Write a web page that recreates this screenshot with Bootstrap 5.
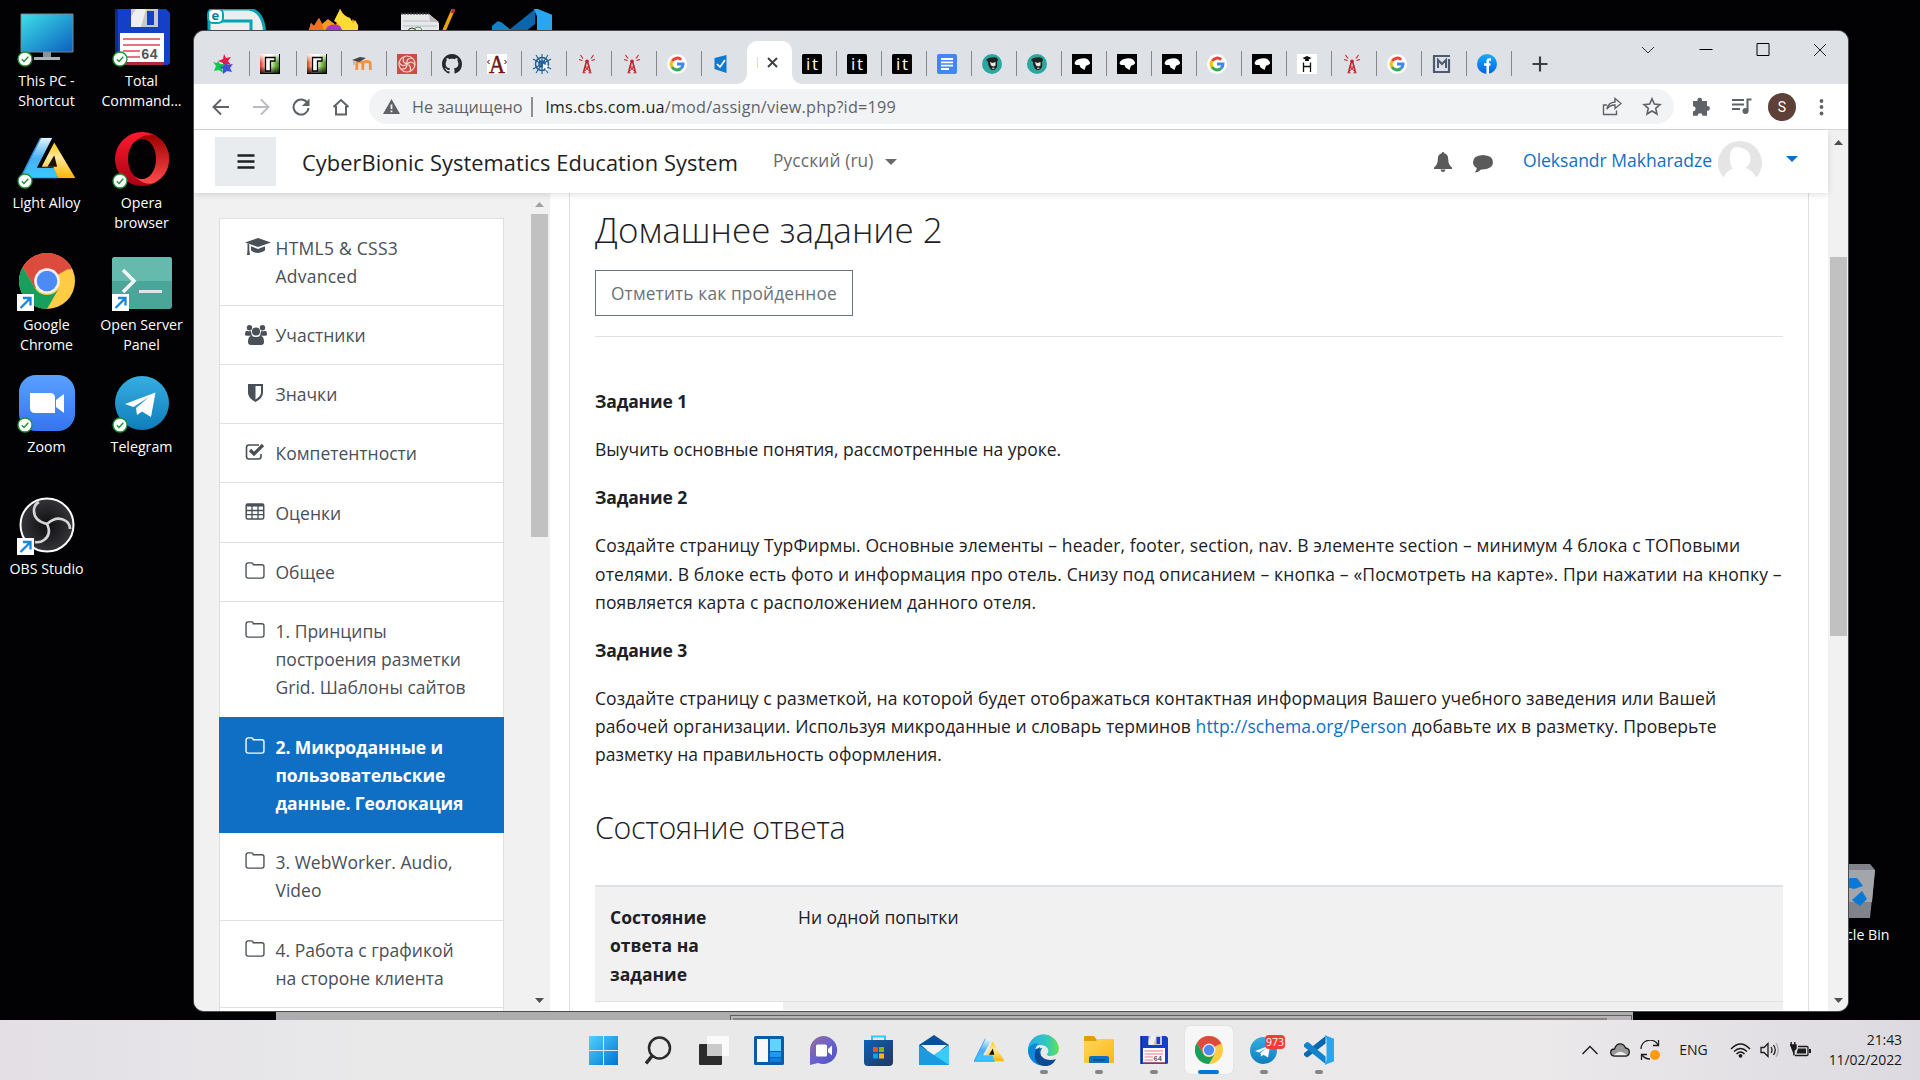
<!DOCTYPE html>
<html lang="ru">
<head>
<meta charset="utf-8">
<title>Домашнее задание 2</title>
<link rel="stylesheet" href="https://cdn.jsdelivr.net/npm/bootstrap@5.3.0/dist/css/bootstrap.min.css">
<script src="https://cdn.jsdelivr.net/npm/bootstrap@5.3.0/dist/js/bootstrap.bundle.min.js"></script>
<style>
html,body{width:1920px;height:1080px;overflow:hidden}
body{background:#020104;font-family:"Open Sans","Noto Sans",sans-serif;font-size:17.5px;line-height:28.125px;color:#1d2125;position:relative}
svg{display:block;flex:none}
/* desktop */
.desk-grid{width:570px;margin-left:-1px;grid-template-columns:repeat(6,95px);grid-template-rows:repeat(5,122px)}
.desk-item{padding-top:9px;color:#fff;font-size:14.2px;line-height:20px;text-align:center}
.desk-item .pic{width:56px;height:56px;margin:0 auto 6px;position:relative}
.desk-item .ovl{position:absolute;left:-2px;bottom:-2px}
.bin-item{position:absolute;left:1805px;top:854px;width:95px}
.back-win{position:absolute;left:276px;top:1011px;width:1357px;height:9px;background:#adadad}
.back-win2{position:absolute;left:454px;top:4px;width:902px;height:6px;border:1px solid #5e5e5e;border-bottom:0;background:#b5b5b5}
.back-win2::after{content:"";position:absolute;left:2px;right:24px;top:2px;height:2px;background:#858585}
/* browser */
.browser{position:absolute;left:194px;top:31px;width:1654px;height:980px;border-radius:10px;overflow:hidden;background:#fff;box-shadow:0 0 0 1px #4b4b4d}
.strip{height:53px;background:#dee1e6;padding-left:9px}
.tb{width:45px;height:25px;margin-top:20px;border-right:1px solid #85888d;padding-left:10px;display:flex;align-items:center}
.tb.nosep{border-color:transparent}
.tb-on{width:45px;height:43px;margin-top:10px;background:#fff;border-radius:10px 10px 0 0;padding-left:10px;position:relative}
.tb-on::before,.tb-on::after{content:"";position:absolute;bottom:0;width:10px;height:10px}
.tb-on::before{left:-10px;background:radial-gradient(circle at 0 0,transparent 9.5px,#fff 10px)}
.tb-on::after{right:-10px;background:radial-gradient(circle at 100% 0,transparent 9.5px,#fff 10px)}
.ctl{width:57.3px;display:flex;justify-content:center}
.tools{height:46px;border-bottom:1px solid #d5d6d9;padding:5px 14px 5px 7px}
.tools>.tl{width:40px;display:flex;justify-content:center}
.omni{width:1305px;height:35px;border-radius:18px;background:#f1f3f4;font-size:16.2px;color:#5f6368;margin-left:-1px;padding:0 10px 0 14px;line-height:36px}
.omni .vbar{width:2px;height:20px;background:#8c9095;margin:0 12px 0 9px}
.url-text{letter-spacing:.21px}
/* page */
.page{height:881px}
.topnav{height:63px;background:#fff;box-shadow:0 2px 6px rgba(0,0,0,.12);position:relative;z-index:2;padding-left:21px}
.ham{width:61px;height:49px;background:#e9ecef;border:0;border-radius:0}
.brand{font-size:21.8px;letter-spacing:.09px;margin-left:26px;padding-top:3px;white-space:nowrap}
.caret{width:0;height:0;border:6px solid transparent;border-top-color:currentColor;border-bottom:0}
.lang{font-size:17.3px;letter-spacing:.15px;color:#6a6a6a}
.who{color:#0f6fc5;font-size:17.5px;padding-bottom:3px}
.side{width:356px;background:#f1f1f1;padding:25px 0 0 25px}
.side .list-group{width:285px;--bs-list-group-border-radius:0}
.side .list-group-item{padding:15.1px 20px 15.1px 25px;border-color:#dfdfdf;color:#495057}
.side .list-group-item:first-child{padding-bottom:14.2px}
.side .list-group-item.active{background:#0f6fc5;border-color:#0f6fc5;color:#fff;font-weight:700;letter-spacing:-.1px}
.side .ic{width:30.5px;padding-top:4px}
.sb1{width:17px;margin-left:27px;margin-top:-25px;height:818px}
.thumb{background:#c1c1c1;width:17px}
.main{width:1278px;padding-left:19px;background:#fff}
.cardish{width:1240px;height:818px;border:1px solid #dfdfdf;border-width:0 1px;padding:14px 25px 0}
.ttl{font-weight:300;font-size:35px;line-height:45px;letter-spacing:.05px;margin:0}
.ttl2{font-weight:300;font-size:30.4px;line-height:40px;letter-spacing:-.28px;margin:40px 0 0}
.btn-mark{height:46px;border:1px solid #6a737b;border-radius:0;color:#6a737b;font-size:17.3px;letter-spacing:.16px;padding:2px 15px 0;margin-top:18px}
.sep-line{border-top:1px solid #dee2e6;margin-top:20px}
.task p{margin:0 0 20px;white-space:nowrap}
.task a{color:#0f6fc5;text-decoration:none}
.s06{letter-spacing:.067px}.s08{letter-spacing:.085px}.s10{letter-spacing:.108px}.s14{letter-spacing:.141px}
.rowx{border-top:2px solid #dee2e6;background:#f1f1f1;height:116px;padding-top:16px;margin-top:37px}
.sb2{width:20px;background:#f1f1f1;padding:0 2px}
/* taskbar */
.taskbar{position:absolute;left:0;top:1020px;width:1920px;height:60px;background:linear-gradient(90deg,#e3dfe5,#e9e9ea 20%,#ebe9ea 80%,#dcdae0)}
.tk{width:55px;height:60px;position:relative;display:flex;align-items:center;justify-content:center}
.tk.run::after{content:"";position:absolute;left:24px;top:50px;width:8px;height:4px;border-radius:2px;background:#858585}
.tk.on::before{content:"";position:absolute;left:3.5px;top:6px;width:48px;height:48px;border-radius:5px;background:#f7f7f8;box-shadow:0 0 1px #bbb}
.tk.on::after{left:17px;width:21px;background:#0078d7}
.tk svg{position:relative}
.cnt{position:absolute;left:29px;top:15px;width:20px;height:14px;border-radius:4px;background:#f23c34;color:#fff;font-size:10.5px;line-height:14px;text-align:center}
.tray{position:absolute;right:18px;top:0;height:60px;font-size:14px;line-height:20px;color:#1b1b1b}
</style>
</head>
<body>
<svg width="0" height="0" class="position-absolute">
<defs>
<linearGradient id="gMon" x1="0" y1="0" x2="1" y2="1"><stop offset="0" stop-color="#3fe0e8"/><stop offset="1" stop-color="#0a5fc0"/></linearGradient>
<linearGradient id="gOp" x1="0" y1="0" x2="0" y2="1"><stop offset="0" stop-color="#ff1b2d"/><stop offset="1" stop-color="#a70014"/></linearGradient>
<linearGradient id="gOp2" x1="0" y1="0" x2="0" y2="1"><stop offset="0" stop-color="#9c0000"/><stop offset="1" stop-color="#ff4b4b"/></linearGradient>
<linearGradient id="gZm" x1="0" y1="0" x2="0" y2="1"><stop offset="0" stop-color="#5aa0ff"/><stop offset="1" stop-color="#3474f2"/></linearGradient>
<linearGradient id="gTg" x1="0" y1="0" x2="0" y2="1"><stop offset="0" stop-color="#37aee2"/><stop offset="1" stop-color="#0f7dba"/></linearGradient>
<linearGradient id="gBl" x1="0" y1="0" x2="0" y2="1"><stop offset="0" stop-color="#e6f6ff"/><stop offset=".5" stop-color="#4ab0f5"/><stop offset="1" stop-color="#37c8ff"/></linearGradient>
<linearGradient id="gYe" x1="0" y1="0" x2="0" y2="1"><stop offset="0" stop-color="#ffc800"/><stop offset=".4" stop-color="#ffe9a0"/><stop offset="1" stop-color="#ffb400"/></linearGradient>
<linearGradient id="gWin" x1="0" y1="0" x2="1" y2="1"><stop offset="0" stop-color="#4fd3ff"/><stop offset="1" stop-color="#0074d0"/></linearGradient>
<linearGradient id="gRb" x1="0" y1="0" x2="1" y2="0"><stop offset="0" stop-color="#e03020"/><stop offset=".3" stop-color="#ffe8b0"/><stop offset=".5" stop-color="#fff"/><stop offset=".75" stop-color="#7ac040"/><stop offset="1" stop-color="#3a7028"/></linearGradient>
<linearGradient id="gRb2" x1="0" y1="0" x2="0" y2="1"><stop offset="0" stop-color="#fff" stop-opacity=".9"/><stop offset=".45" stop-color="#fff" stop-opacity="0"/><stop offset=".6" stop-color="#000" stop-opacity="0"/><stop offset="1" stop-color="#000" stop-opacity=".85"/></linearGradient>
<linearGradient id="gEdge" x1="0" y1="0" x2="1" y2="0"><stop offset="0" stop-color="#2aa8e8"/><stop offset=".6" stop-color="#30c8c0"/><stop offset="1" stop-color="#66e050"/></linearGradient>
<linearGradient id="gChat" x1="0" y1="0" x2="1" y2="1"><stop offset="0" stop-color="#9a6a9c"/><stop offset=".5" stop-color="#6a62cc"/><stop offset="1" stop-color="#4a4fc0"/></linearGradient>
<linearGradient id="gStore" x1="0" y1="0" x2="1" y2="1"><stop offset="0" stop-color="#0a62b8"/><stop offset="1" stop-color="#24365c"/></linearGradient>
<linearGradient id="gFold" x1="0" y1="0" x2="1" y2="1"><stop offset="0" stop-color="#ffd65c"/><stop offset="1" stop-color="#fcb813"/></linearGradient>
<linearGradient id="gFb" x1="0" y1="0" x2="0" y2="1"><stop offset="0" stop-color="#18acfe"/><stop offset="1" stop-color="#0163e0"/></linearGradient>
<radialGradient id="gObs"><stop offset="0" stop-color="#0e0d10"/><stop offset="1" stop-color="#353438"/></radialGradient>

<symbol id="ok" viewBox="0 0 16 16"><circle cx="8" cy="8" r="7" fill="#fff" stroke="#1d9133" stroke-width="1.3"/><path d="M4.8 8.2 7 10.4 11.3 5.8" fill="none" stroke="#1d9133" stroke-width="1.4"/></symbol>
<symbol id="sc" viewBox="0 0 17 17"><path d="M0 0h17v17H0z" fill="#fff"/><path d="M3.5 14 13 4.500M6 4h7.500v7.500" fill="none" stroke="#1788dc" stroke-width="2.300"/></symbol>
<symbol id="chrome" viewBox="0 0 48 48"><circle cx="24" cy="24" r="24" fill="#fc4"/><path d="M24 24 44.800 12A24 24 0 0 0 3.200 12L13.600 30z" fill="#dd4b3e"/><path d="M3.200 12A24 24 0 0 0 24 48L34.400 30A12 12 0 0 1 13.600 30z" fill="#17a05d"/><path d="M24 13h20.800" stroke="#dd4b3e" stroke-width="2"/><circle cx="24" cy="24" r="11" fill="#f1f1f1"/><circle cx="24" cy="24" r="8.800" fill="#4c8bf5"/></symbol>
<symbol id="tg" viewBox="0 0 54 54"><circle cx="27" cy="27" r="27" fill="url(#gTg)"/><path d="M10 28 40.500 16.500 36 41 27 35.500 22 39 21 32 34 21 18.500 31z" fill="#fff"/></symbol>
<symbol id="disk" viewBox="0 0 56 56"><path d="M1 0h51l4 4v50l-2 2H1z" fill="#1440c8"/><path d="M4 0v56H1V0z" fill="#0c2a94"/><path d="M17 0h27v18H17z" fill="#c8c8cc"/><path d="M22 0h10l-5 18h-10V8z" fill="#efeff2"/><path d="M33 2h7v14h-7z" fill="#1440c8"/><path d="M6 24h44v29H6z" fill="#fff"/><path d="M9 30h37M9 36h37M9 42h17M9 48h17" stroke="#e0455a" stroke-width="1.500"/><path d="M6 53h44v3H6z" fill="#b0283c"/><text x="27" y="50" font-size="14" font-weight="700" fill="#555" font-family="Liberation Mono,monospace">64</text></symbol>
<symbol id="alloy" viewBox="0 0 56 42"><path d="M21 0h12L17 31h18l4 11H0z" fill="url(#gBl)"/><path d="M35 5 57 42H39l-5-12H22z" fill="url(#gYe)"/><path d="M35 18 28 30h10z" fill="#1a1206"/><path d="M21 0 0 42h39" fill="none" stroke="#2a8fe8" stroke-width="1.500"/></symbol>
<symbol id="vsc" viewBox="0 0 32 32"><path d="M23 1v8L5 23l-2 1-3-2.500v-2z" fill="#0a66ad"/><path d="m0 10 3-2.500 2 .5 18 15v8L0 12.500z" fill="#0f83cc"/><path d="m22 0 10 4v24l-10 4 2-5V5z" fill="#2aa6f0"/></symbol>
<symbol id="G" viewBox="0 0 20 20"><circle cx="10" cy="10" r="10" fill="#fff"/><g fill="none" stroke-width="3"><path d="M5.100 7A6 6 0 0 1 14.200 5.600" stroke="#ea4335"/><path d="M5 13A6 6 0 0 1 5 7" stroke="#fbbc05"/><path d="M14 14.500A6 6 0 0 1 5 13" stroke="#34a853"/><path d="M10 10h6A6 6 0 0 1 14 14.500" stroke="#4285f4"/></g></symbol>
<symbol id="star3" viewBox="0 0 20 20"><path d="m11 0 2 4 5-1-3 4 3 4-5-1-3 4 0-5-5-2 5-2z" fill="#e81848"/><path d="m5 7 2 3 5 0-3 4 1 5-4-3-5 1 2-5-3-4 4 1z" fill="#12c94c"/><path d="m13 8 2 3 5-1-3 4 2 4-5-1-4 3 0-5-4-2 5-1z" fill="#3c50e0"/></symbol>
<symbol id="rb" viewBox="0 0 20 20"><path d="M0 0h20v20H0z" fill="url(#gRb)"/><path d="M0 0h20v20H0z" fill="url(#gRb2)"/><path d="M5.500 3.500h9.500V7h-4.500v10h-5z" fill="#f8f8f8" stroke="#000" stroke-width="1.300"/><path d="M19.500 0v20M0 19.500h20" stroke="#000" stroke-width="1"/></symbol>
<symbol id="ant" viewBox="0 0 20 20"><g fill="none" stroke="#c8202c"><path d="M9 9 6.500 18.500M11 9l2.500 9.500" stroke-width="1.600"/><path d="M5.500 18.800h3M11.500 18.800h3M8 13h4M8 13l4.500 4M12 13l-4.500 4" stroke-width="1"/><path d="M6 4.500 3.500 1M14 4.500 16.500 1M5.500 6.500 2 5.500M14.500 6.500l3.500-1" stroke-width="1.100"/></g><circle cx="10" cy="7.500" r="1.900" fill="#c8202c"/></symbol>
<symbol id="it" viewBox="0 0 20 20"><rect width="20" height="20" rx="1.500"/><text x="4" y="16" font-size="17" fill="#fff" font-family="Open Sans,sans-serif" textLength="12">it</text></symbol>
<symbol id="hip" viewBox="0 0 20 20"><circle cx="10" cy="10" r="10" fill="#2aa79f"/><path d="M4 6q2-3 6-2.500 5-1 6 2l-1 3q1 5-2 7-3 1.500-5-1Q5.500 11 6 8z" fill="#222"/><path d="m8 8 2.500 1 3-1v3.500l-2 1-2.500-1z" fill="#e8e8e8"/><path d="M10 14.200h2.500" stroke="#ddd"/></symbol>
<symbol id="bird" viewBox="0 0 20 20"><path d="M0 0h20v20H0z"/><path d="M2.500 9.500Q3 6 7 5q6-1.500 9 .5 2 2 2 4-1.500 2-4 2.200L12.500 16l-4-2.500L7.500 11H4z" fill="#fff"/></symbol>
<symbol id="bin" viewBox="0 0 50 54"><path d="M1 6 5 0h40l5 6-5 48H6z" fill="#80848a"/><path d="M3 6h47l-3 32H6z" fill="#a2a5aa"/><path d="m18 22 7-8h7l6 8-9 3zM37 27l5 8-7 7-8-6zM14 27l8 7v6l-9-4z" fill="#0a78d4"/></symbol>
<symbol id="folder" viewBox="0 0 19 16"><path d="M1 3Q1 .8 3.200.8h3q1.600 0 1.600 1.700h8.200Q18 2.500 18 4.500v8.700q0 2-2 2H3q-2 0-2-2z" fill="none" stroke="currentColor" stroke-width="1.300"/></symbol>
</defs></svg>

<div class="desk-grid d-grid">
 <div class="desk-item"><div class="pic"><svg width="56" height="56" viewBox="0 0 56 56"><path d="M2 5h52v38H2z" fill="url(#gMon)" stroke="#7a8890"/><path d="M24 43h8v6h-8z" fill="#8a949c"/><path d="M15 48h26v3H15z" fill="#a9b4bb"/></svg><svg class="ovl" width="16" height="16"><use href="#ok"/></svg></div>This PC -<br>Shortcut</div>
 <div class="desk-item"><div class="pic"><svg width="56" height="56"><use href="#disk"/></svg><svg class="ovl" width="16" height="16"><use href="#ok"/></svg></div>Total<br>Command...</div>
 <div class="desk-item"><svg class="mx-auto" width="60" height="56" viewBox="0 0 60 56"><path d="M14 0h28q16 2 16 30H2V8z" fill="#eee" stroke="#00a5b5" stroke-width="3"/><path d="M12 12h32v12" fill="none" stroke="#00a5b5" stroke-width="3"/><rect x="1" y="0" width="15" height="14" rx="5" fill="#fff" stroke="#00a5b5" stroke-width="2"/><text x="4.500" y="11" font-size="13" font-weight="700" fill="#00808c" font-family="Open Sans,sans-serif">e</text></svg></div>
 <div class="desk-item"><svg class="mx-auto" width="56" height="56" viewBox="0 0 56 56"><path d="M3 28 7 14l3 3 5-8 3 6 6-5 8 6L36 0q4 8 10 9l1 4 2-3q6 10 5 22z" fill="#f79a1e"/><path d="M3 28 7 14l3 3 5-8 3 6 4 13z" fill="#f2701c"/><path d="m36 0-6 12q6 2 8 12h14q3-3 2-8l-3-5-2 3-3-5q-6-1-10-9" fill="#fbdc36"/><path d="M20 24q4-12 16-7l8 14H20z" fill="#a438cc"/></svg></div>
 <div class="desk-item"><svg class="mx-auto" width="56" height="56" viewBox="0 0 56 56"><path d="M2 5h28l10 9v42H2z" fill="#e8e8e8"/><path d="M2 4.500h28" stroke="#333" stroke-width="2" stroke-dasharray="2 1"/><path d="m30 5 1 8h9z" fill="#bbb"/><path d="M4 12h26M4 17h34" stroke="#b8bccb"/><circle cx="13" cy="23" r="4" fill="none" stroke="#333"/><circle cx="19" cy="22" r="4" fill="none" stroke="#4a4"/><path d="M54 1 44 24" stroke="#eba312" stroke-width="3.500"/><path d="m55 0-2 4" stroke="#b33" stroke-width="3.500"/></svg></div>
 <div class="desk-item"><svg class="mx-auto" width="60" height="60" viewBox="0 1 32 32"><use href="#vsc" width="32" height="32"/></svg></div>
 <div class="desk-item"><div class="pic"><svg class="mx-auto" width="56" height="56" viewBox="-1 -6 58 56"><use href="#alloy" width="57" height="42"/></svg><svg class="ovl" width="16" height="16"><use href="#ok"/></svg></div>Light Alloy</div>
 <div class="desk-item"><div class="pic"><svg width="56" height="56" viewBox="0 0 56 56"><ellipse cx="28" cy="28" rx="27" ry="27" fill="url(#gOp)"/><path d="M20 11Q30 2 40 4 55 12 55 28T40 52Q30 55 20 45q8 6 16-1 6-7 6-16t-6-16q-8-7-16-1" fill="url(#gOp2)"/><ellipse cx="28" cy="28" rx="14" ry="20" fill="#020104"/></svg><svg class="ovl" width="16" height="16"><use href="#ok"/></svg></div>Opera<br>browser</div>
 <div></div><div></div><div></div><div></div>
 <div class="desk-item"><div class="pic"><svg width="56" height="56"><use href="#chrome"/></svg><svg class="ovl" width="17" height="17"><use href="#sc"/></svg></div>Google<br>Chrome</div>
 <div class="desk-item"><div class="pic"><svg class="overflow-visible" width="56" height="56" viewBox="2 0 56 56"><rect y="4" width="60" height="52" rx="3" fill="#4aa698"/><path d="M0 28V7q0-3 3-3h54q3 0 3 3v21z" fill="#66b9ad"/><path d="m11 17 11 11-11 11" fill="none" stroke="#f5f5f5" stroke-width="3.500"/><path d="M27 38.500h23" stroke="#dfe5e4" stroke-width="3"/></svg><svg class="ovl" width="17" height="17"><use href="#sc"/></svg></div>Open Server<br>Panel</div>
 <div></div><div></div><div></div><div></div>
 <div class="desk-item"><div class="pic"><svg width="56" height="56" viewBox="0 0 56 56"><rect width="56" height="56" rx="17" fill="url(#gZm)"/><path d="M11 18h20q5 0 5 5v15H16q-5 0-5-5z" fill="#fff"/><path d="m37 25 8-6v19l-8-6z" fill="#fff"/></svg><svg class="ovl" width="16" height="16"><use href="#ok"/></svg></div>Zoom</div>
 <div class="desk-item"><div class="pic"><svg width="56" height="56" viewBox="0 0 56 56"><use href="#tg" x="1" y="1" width="54" height="54"/></svg><svg class="ovl" width="16" height="16"><use href="#ok"/></svg></div>Telegram</div>
 <div></div><div></div><div></div><div></div>
 <div class="desk-item"><div class="pic"><svg width="56" height="56" viewBox="0 0 56 56"><circle cx="28" cy="28" r="26.500" fill="url(#gObs)" stroke="#fff" stroke-width="2"/><g fill="none" stroke="#d5d5d8" stroke-width="2.600"><path d="M28 27Q14 24 15 12 16 7 20 5"/><path d="M28 27q10-9 19-3 4 3 4 8"/><path d="M28 27q5 10-3 16-4 3-9 2"/></g></svg><svg class="ovl" width="17" height="17"><use href="#sc"/></svg></div>OBS Studio</div>
</div>
<div class="desk-item bin-item"><svg width="50" height="54" style="margin:1px 0 7px 20px"><use href="#bin"/></svg>Recycle Bin</div>
<div class="back-win"><div class="back-win2"></div></div>

<div class="browser">
 <div class="strip d-flex align-items-start">
  <div class="tb" style="width:47px"><svg width="20" height="20"><use href="#star3"/></svg></div>
  <div class="tb" style="width:47px"><svg width="20" height="20"><use href="#rb"/></svg></div>
  <div class="tb"><svg width="20" height="20"><use href="#rb"/></svg></div>
  <div class="tb"><svg width="20" height="20" viewBox="0 0 20 20"><path d="M4 16V9q0-1.500 3-1.500T10 9.500V16M10.500 9.500q0-2 3.500-2t3.500 2.500v6" transform="translate(.8)" fill="none" stroke="#f7923a" stroke-width="2.800"/><path d="m0 6 8-3 6 1-7 4z" fill="#444"/><path d="M2 6v5" stroke="#888" stroke-width=".8"/></svg></div>
  <div class="tb"><svg width="20" height="20" viewBox="0 0 20 20"><path d="M0 0h20v20H0z" fill="#cf4b46"/><g fill="none" stroke="#f6d8d4" stroke-width="1.200"><circle cx="10" cy="10" r="8"/><path d="M10 10q-6-2-3-7M10 10q-1-6 5-6M10 10q5-4 8 1M10 10q5 2 3 7M10 10q0 6-6 5M10 10q-5 4-8-2"/></g></svg></div>
  <div class="tb"><svg width="20" height="20" viewBox="0 0 16 16"><path fill="#24292f" d="M8 0C3.580 0 0 3.580 0 8c0 3.540 2.290 6.530 5.470 7.590.4.070.55-.17.55-.38 0-.19-.01-.82-.01-1.490-2.010.37-2.530-.49-2.690-.94-.09-.23-.48-.94-.82-1.130-.28-.15-.68-.52-.01-.53.63-.01 1.080.58 1.230.82.72 1.210 1.870.87 2.330.66.070-.52.28-.87.51-1.070-1.780-.2-3.640-.89-3.640-3.950 0-.87.31-1.590.82-2.150-.08-.2-.36-1.020.080-2.120 0 0 .67-.21 2.200.82.64-.18 1.320-.27 2-.27s1.360.09 2 .27c1.530-1.040 2.200-.82 2.200-.82.44 1.100.16 1.920.080 2.120.51.56.82 1.270.82 2.150 0 3.070-1.870 3.750-3.650 3.950.29.25.54.73.54 1.480 0 1.070-.01 1.930-.01 2.200 0 .21.15.46.55.38A8.010 8.010 0 0 0 16 8c0-4.420-3.580-8-8-8z"/></svg></div>
  <div class="tb"><svg class="overflow-visible" width="20" height="20" viewBox="0 0 20 20"><path d="M0 0h20v20H0z" fill="#fff"/><text x="2" y="18.500" font-size="26" textLength="16" lengthAdjust="spacingAndGlyphs" fill="#6e1414" stroke="#6e1414" stroke-width=".5" font-family="Liberation Serif,serif">A</text><path d="M2.500 6 .5 8l2 2M17.500 6l2 2-2 2" fill="none" stroke="#400"/></svg></div>
  <div class="tb"><svg width="20" height="20" viewBox="0 0 20 20"><g fill="none" stroke="#215f95" stroke-width="1.500"><circle cx="10" cy="10" r="6.500"/><circle cx="10" cy="10" r="3"/><path d="M10 0v20M1 5l18 10M19 5 1 15M4 1l12 18M16 1 4 19" stroke-width="1.100"/></g><path d="m11 10 6 2-2 1 1 3-2 .5-1-3-2 1.500z" fill="#fff"/></svg></div>
  <div class="tb"><svg width="20" height="20"><use href="#ant"/></svg></div>
  <div class="tb"><svg width="20" height="20"><use href="#ant"/></svg></div>
  <div class="tb"><svg width="20" height="20"><use href="#G"/></svg></div>
  <div class="tb nosep"><svg width="20" height="20" viewBox="0 0 20 20"><path d="M2.500 4 14.500 1v18l-12-4z" fill="#0f78d0"/><path d="m5 10 3 3 5-7" fill="none" stroke="#fff" stroke-width="1.700"/></svg></div>
  <div class="tb-on d-flex align-items-center"><i style="width:1px;height:11px;background:#f5d9a0"></i><svg class="ms-2" width="13" height="13" viewBox="0 0 13 13"><path d="m2 2 9 9M11 2l-9 9" stroke="#3c4043" stroke-width="1.900"/></svg></div>
  <div class="tb"><svg width="20" height="20"><use href="#it"/></svg></div>
  <div class="tb"><svg width="20" height="20"><use href="#it"/></svg></div>
  <div class="tb"><svg width="20" height="20"><use href="#it"/></svg></div>
  <div class="tb"><svg width="20" height="20" viewBox="0 0 20 20"><rect width="20" height="20" rx="2" fill="#4285f4"/><path d="M4 5h12M4 8.300h12M4 11.600h12M4 15h8" stroke="#fff" stroke-width="1.800"/></svg></div>
  <div class="tb"><svg width="20" height="20"><use href="#hip"/></svg></div>
  <div class="tb"><svg width="20" height="20"><use href="#hip"/></svg></div>
  <div class="tb"><svg width="20" height="20"><use href="#bird"/></svg></div>
  <div class="tb"><svg width="20" height="20"><use href="#bird"/></svg></div>
  <div class="tb"><svg width="20" height="20"><use href="#bird"/></svg></div>
  <div class="tb"><svg width="20" height="20"><use href="#G"/></svg></div>
  <div class="tb"><svg width="20" height="20"><use href="#bird"/></svg></div>
  <div class="tb"><svg width="20" height="20" viewBox="0 0 20 20"><path d="M0 0h20v20H0z" fill="#fff"/><path d="m10 2 4.500 2L10 6.500 5.500 4z" fill="#111"/><path d="M8 6.200h4" stroke="#111" stroke-width="1.500"/><path d="M6.500 8.500V18M13.500 8.500V18M6.500 12.500h7" fill="none" stroke="#111" stroke-width="1.300"/></svg></div>
  <div class="tb"><svg width="20" height="20"><use href="#ant"/></svg></div>
  <div class="tb"><svg width="20" height="20"><use href="#G"/></svg></div>
  <div class="tb"><svg width="20" height="20" viewBox="0 0 20 20"><path d="M18 2H2v16h15V5" fill="none" stroke="#4b5c70" stroke-width="2.200"/><path d="M6 14V6l4 4 4-4v8" fill="none" stroke="#4b5c70" stroke-width="2"/></svg></div>
  <div class="tb"><svg width="20" height="20" viewBox="0 0 20 20"><circle cx="10" cy="10" r="10" fill="url(#gFb)"/><path d="M14 5.500h-1.500q-1.800 0-1.800 1.900V20M7 10.500h6.500" fill="none" stroke="#fff" stroke-width="2.500"/></svg></div>
  <svg style="margin:25px 0 0 20px" width="16" height="16" viewBox="0 0 16 16"><path d="M8 .5v15M.5 8h15" stroke="#3c4043" stroke-width="2.200"/></svg>
  <div class="d-flex ms-auto" style="padding-top:12px;margin-right:-1px">
   <div class="ctl"><svg width="14" height="14" viewBox="0 0 14 14"><path d="m1 4 6 6 6-6" fill="none" stroke="#333"/></svg></div>
   <div class="ctl"><svg width="14" height="14"><path d="M.5 6.500h13" stroke="#000"/></svg></div>
   <div class="ctl"><svg width="14" height="14"><path d="M1 .5h12v12H1z" fill="none" stroke="#000"/></svg></div>
   <div class="ctl"><svg width="14" height="14"><path d="m1 1 12 12M13 1 1 13" stroke="#222"/></svg></div>
  </div>
 </div>
 <div class="tools d-flex align-items-center">
  <div class="tl"><svg width="18" height="18" viewBox="0 0 18 18"><path d="M17 9H2M9 1.500 1.500 9 9 16.500" fill="none" stroke="#5f6368" stroke-width="1.900"/></svg></div>
  <div class="tl"><svg width="18" height="18" viewBox="0 0 18 18"><path d="M1 9h15M9 1.500 16.500 9 9 16.500" fill="none" stroke="#bbbdc0" stroke-width="1.900"/></svg></div>
  <div class="tl"><svg width="18" height="18" viewBox="0 0 18 18"><path d="M15 4.500A7.500 7.500 0 1 0 16.500 10" fill="none" stroke="#5f6368" stroke-width="2"/><path d="M17.500.5v7.500H10z" fill="#5f6368"/></svg></div>
  <div class="tl"><svg width="18" height="18" viewBox="0 0 18 18"><path d="M1.500 9 9 2l7.500 7M4 8v8.500h10V8" fill="none" stroke="#5f6368" stroke-width="2"/></svg></div>
  <div class="omni d-flex align-items-center ms-2">
   <svg width="17" height="15" viewBox="0 0 17 15"><path d="M8.500 0 17 15H0z" fill="#5f6368"/><path d="M8.500 5.500v4.500M8.500 11.500v1.700" stroke="#f1f3f4" stroke-width="1.800"/></svg>
   <span style="margin-left:12px">Не защищено</span><span class="vbar"></span><span class="url-text"><span style="color:#202124">lms.cbs.com.ua</span>/mod/assign/view.php?id=199</span>
   <svg class="ms-auto" width="20" height="19" viewBox="0 0 20 19"><path d="M5 8H1.500v9.500h13v-4M5 12q1-6.500 8-7V1.500l6 5-6 5V8q-5-.2-8 4z" fill="none" stroke="#5f6368" stroke-width="1.400"/></svg>
   <svg style="margin:0 2px 0 20px" width="20" height="19" viewBox="0 0 20 19"><path d="m10 1.800 2.300 5.300 5.700.5-4.300 3.800 1.300 5.600-5-3-5 3 1.300-5.600L2 7.600l5.700-.5z" fill="none" stroke="#5f6368" stroke-width="1.600"/></svg>
  </div>
  <svg style="margin-left:18px" width="19" height="19" viewBox="0 0 19 19"><path d="M1 4h4.500a2.400 2.400 0 1 1 4.500 0h5v5a2.400 2.400 0 1 1 0 4.700v5h-4.500a2.400 2.400 0 0 0-4.800 0H1v-4.500a2.500 2.500 0 0 0 0-5z" fill="#5f6368"/></svg>
  <svg style="margin-left:21px" width="20" height="17" viewBox="0 0 20 17"><path d="M0 2h12M0 6.500h12M0 11h8M15.500 13V1.500h4" fill="none" stroke="#5f6368" stroke-width="2"/><circle cx="13.500" cy="13" r="3" fill="#5f6368"/></svg>
  <svg style="margin-left:16px" width="28" height="28" viewBox="0 0 28 28"><circle cx="14" cy="14" r="14" fill="#5d4037"/><text x="14" y="19" font-size="14" fill="#fff" text-anchor="middle" font-family="Roboto,sans-serif">S</text></svg>
  <svg style="margin-left:23px" width="5" height="18" viewBox="0 0 5 18" fill="#5f6368"><circle cx="2.500" cy="3" r="1.900"/><circle cx="2.500" cy="9" r="1.900"/><circle cx="2.500" cy="15.500" r="1.900"/></svg>
 </div>
 <div class="page d-flex">
  <div style="width:1634px">
   <nav class="topnav d-flex align-items-center">
    <button class="ham btn p-0 d-flex justify-content-center align-items-center"><svg width="18" height="15" viewBox="0 0 18 15"><path d="M.5 1.500h17M.5 7.500h17M.5 13.500h17" stroke="#1d2125" stroke-width="2.300"/></svg></button>
    <span class="brand">CyberBionic Systematics Education System</span>
    <span class="lang" style="margin-left:35px">Русский (ru)</span><span class="caret" style="color:#6a6a6a;margin-left:11px"></span>
    <div class="ms-auto d-flex align-items-center" style="margin-right:30px">
     <svg width="18" height="20" viewBox="0 0 18 20"><path d="M9 0q1.200 0 1.200 1.300 4 .9 4 5.700 0 6 3.800 8.500v1.500H0v-1.500Q3.800 13 3.800 7q0-4.800 4-5.700Q7.800 0 9 0zM6.500 17.500h5Q11 20 9 20t-2.500-2.500z" fill="#5a5a5a"/></svg>
     <svg style="margin:4px 30px 0 21px" width="20" height="18" viewBox="0 0 20 18"><path d="M10 0q10 .5 10 7.200T10 14.500q-1 0-2-.1-2 2.600-6.500 3.100Q3.500 16 3.800 13 0 11 0 7.200 0 .5 10 0z" fill="#5a5a5a"/></svg>
     <span class="who">Oleksandr Makharadze</span>
     <svg style="margin-left:6px" width="44" height="44" viewBox="0 0 44 44"><path d="M5.500 37.500A22 22 0 1 1 38.500 37.500Q34 30 27.500 28q5-3 5-10.500T22 7.500 12 18t5 10Q9 30 5.500 37.500z" fill="#e5e5e5"/></svg>
     <span class="caret" style="color:#0f6fc5;margin:-5px 0 0 24px"></span>
    </div>
   </nav>
   <div class="d-flex">
    <aside class="side d-flex align-items-start" style="height:818px">
     <div class="list-group">
      <div class="list-group-item d-flex"><span class="ic"><svg width="26" height="18" viewBox="0 0 26 18" fill="currentColor"><path d="M13 0 26 4.500 13 9 0 4.500z"/><path d="M6 8.300v4q2.500 2.700 7 2.700t7-2.700v-4l-7 2.600z"/><path d="M2.500 5.500V12L2 17h3l-.7-5V6.500z"/></svg></span><span style="letter-spacing:.25px">HTML5 &amp; CSS3<br>Advanced</span></div>
      <div class="list-group-item d-flex"><span class="ic"><svg width="22" height="20" viewBox="0 0 22 20" fill="currentColor"><circle cx="4.500" cy="2.800" r="2.700"/><circle cx="17.500" cy="2.800" r="2.700"/><circle cx="11" cy="6.500" r="4"/><path d="M0 10Q0 5.800 2 5.800q2.500 1 4 0 0 3 1.500 5H2q-2 0-2-.8zM22 10q0-4.200-2-4.200-2.500 1-4 0 0 3-1.500 5H20q2 0 2-.8zM6 20q-3 0-3-3 0-6 3.500-6.300 4.500 2.500 9 0Q19 11 19 17q0 3-3 3z"/></svg></span><span>Участники</span></div>
      <div class="list-group-item d-flex"><span class="ic"><svg style="margin-left:3px" width="15" height="18" viewBox="0 0 15 18"><path d="M0 0h15v9q0 5-7.500 9Q0 14 0 9zM7.500 2v13.500Q13 12 13 8.500V2z" fill="currentColor"/></svg></span><span>Значки</span></div>
      <div class="list-group-item d-flex"><span class="ic"><svg width="20" height="18" viewBox="0 0 20 18"><path d="M14 2H4Q1.500 2 1.500 4.500v9Q1.500 16 4 16h9.500q2.500 0 2.500-2.500V11" fill="none" stroke="currentColor" stroke-width="1.600"/><path d="m5 7 4 4L18 2" fill="none" stroke="currentColor" stroke-width="3.200"/></svg></span><span>Компетентности</span></div>
      <div class="list-group-item d-flex"><span class="ic"><svg width="20" height="17" viewBox="0 0 20 17"><rect x="1.200" y="1" width="17.500" height="15" rx="1.500" fill="none" stroke="currentColor" stroke-width="1.500"/><path d="M1 2.300h18" stroke="currentColor" stroke-width="2.500"/><path d="M1 7.500h18M1 11.700h18M7 3v13M13 3v13" stroke="currentColor" stroke-width="1.300"/></svg></span><span>Оценки</span></div>
      <div class="list-group-item d-flex"><span class="ic"><svg width="20" height="17"><use href="#folder"/></svg></span><span>Общее</span></div>
      <div class="list-group-item d-flex"><span class="ic"><svg width="20" height="17"><use href="#folder"/></svg></span><span class="text-nowrap">1. Принципы<br>построения разметки<br>Grid. Шаблоны сайтов</span></div>
      <div class="list-group-item active d-flex"><span class="ic"><svg width="20" height="17"><use href="#folder"/></svg></span><span class="text-nowrap">2. Микроданные и<br>пользовательские<br>данные. Геолокация</span></div>
      <div class="list-group-item d-flex"><span class="ic"><svg width="20" height="17"><use href="#folder"/></svg></span><span class="text-nowrap">3. WebWorker. Audio,<br>Video</span></div>
      <div class="list-group-item d-flex"><span class="ic"><svg width="20" height="17"><use href="#folder"/></svg></span><span class="text-nowrap">4. Работа с графикой<br>на стороне клиента</span></div>
      <div class="list-group-item">&nbsp;</div>
     </div>
     <div class="sb1 d-flex flex-column align-items-center"><svg style="margin-top:9px" width="9" height="5"><path d="M0 5 4.500 0 9 5z" fill="#a3a3a3"/></svg><div class="thumb" style="height:323px;margin-top:7px"></div><svg class="mt-auto" style="margin-bottom:8px" width="9" height="5"><path d="M0 0l4.500 5L9 0z" fill="#505050"/></svg></div>
    </aside>
    <main class="main">
     <div class="cardish">
      <h2 class="ttl">Домашнее задание 2</h2>
      <button class="btn-mark btn">Отметить как пройденное</button>
      <div class="sep-line"></div>
      <div class="task" style="padding-top:50px">
       <p><b style="letter-spacing:-.12px">Задание 1</b></p>
       <p>Выучить основные понятия, рассмотренные на уроке.</p>
       <p><b style="letter-spacing:-.12px">Задание 2</b></p>
       <p><span class="s10">Создайте страницу ТурФирмы. Основные элементы – header, footer, section, nav. В элементе section – минимум 4 блока с ТОПовыми</span><br><span class="s14">отелями. В блоке есть фото и информация про отель. Снизу под описанием – кнопка – «Посмотреть на карте». При нажатии на кнопку –</span><br><span class="s08">появляется карта с расположением данного отеля.</span></p>
       <p><b style="letter-spacing:-.12px">Задание 3</b></p>
       <p><span class="s06">Создайте страницу с разметкой, на которой будет отображаться контактная информация Вашего учебного заведения или Вашей</span><br><span class="s06">рабочей организации. Используя микроданные и словарь терминов <a href="#">http://schema.org/Person</a> добавьте их в разметку. Проверьте</span><br>разметку на правильность оформления.</p>
      </div>
      <h3 class="ttl2">Состояние ответа</h3>
      <div class="rowx d-flex"><b style="width:203px;padding-left:15px">Состояние<br>ответа на<br>задание</b><span>Ни одной попытки</span></div>
      <div class="d-flex" style="border-top:1px solid #dee2e6;height:9px"><div style="width:188px"></div><div class="flex-fill" style="background:#efefef"></div></div>
     </div>
    </main>
   </div>
  </div>
  <div class="sb2 d-flex flex-column align-items-center"><svg style="margin-top:10px" width="9" height="5"><path d="M0 5 4.500 0 9 5z" fill="#505050"/></svg><div class="thumb" style="height:379px;margin-top:112px"></div><svg class="mt-auto" style="margin-bottom:8px" width="9" height="5"><path d="M0 0l4.500 5L9 0z" fill="#505050"/></svg></div>
 </div>
</div>

<div class="taskbar">
 <div class="d-flex" style="padding-left:576px">
  <div class="tk"><svg width="29" height="29" viewBox="0 0 29 29"><path d="M0 0h14v14H0zM15 0h14v14H15zM0 15h14v14H0zM15 15h14v14H15z" fill="url(#gWin)"/></svg></div>
  <div class="tk"><svg width="27" height="29" viewBox="0 0 27 29"><circle cx="14.500" cy="12" r="10.500" fill="none" stroke="#2b2b2b" stroke-width="2.500"/><path d="m7 20-6 7.500" stroke="#2b2b2b" stroke-width="3.500"/></svg></div>
  <div class="tk"><svg width="30" height="29" viewBox="0 0 30 29"><rect y="8" width="23" height="21" rx="1" fill="#2c2c2c"/><path d="M8 0h22v20H8z" fill="#fff" opacity=".75"/></svg></div>
  <div class="tk"><svg width="30" height="29" viewBox="0 0 30 29"><rect width="30" height="29" rx="1.500" fill="#0c5ba8"/><path d="M3 3h11v23H3z" fill="#f8f8f8"/><path d="M16 3h11v12H16z" fill="#62d2ff"/><path d="M16 16h11v5H16z" fill="#1c9cf0"/><path d="M16 22h11v4H16z" fill="#0a7ee0"/></svg></div>
  <div class="tk"><svg width="29" height="29" viewBox="0 0 29 29"><path d="M15 0a14 14 0 1 1-6 27l-8 2V14A14 14 0 0 1 15 0z" fill="url(#gChat)"/><rect x="7" y="8.500" width="11" height="12" rx="1.500" fill="#fff"/><path d="m19 13 4-3.500v10L19 16z" fill="#fff"/></svg></div>
  <div class="tk"><svg width="29" height="31" viewBox="0 0 29 31"><path d="M8 6V1.500h13V6" fill="none" stroke="#2ccbfa" stroke-width="2"/><path d="M0 5h29v22q0 4-4 4H4q-4 0-4-4z" fill="url(#gStore)"/><path d="M9 12h5v5H9z" fill="#f25022"/><path d="M15 12h5v5h-5z" fill="#7fba00"/><path d="M9 18.500h5v5H9z" fill="#00a4ef"/><path d="M15 18.500h5v5h-5z" fill="#ffb900"/></svg></div>
  <div class="tk"><svg width="30" height="30" viewBox="0 0 30 30"><path d="M0 10 15 0l15 10v5H0z" fill="#0b4f9c"/><path d="M2 10h26L15 21z" fill="#f2f2f2"/><path d="M0 10v20h30V10L15 20z" fill="#1c9ae0"/><path d="M30 10 15 20l15 10z" fill="#38ccf6"/></svg></div>
  <div class="tk"><svg width="30" height="24"><use href="#alloy"/></svg></div>
  <div class="tk run"><svg width="31" height="32" viewBox="0 0 31 32"><path d="M0 16A15.500 15.500 0 0 0 27 26q-8 4-13-2-3-5 0-10z" fill="#1068c0"/><path d="M0 18A15.500 15.500 0 0 1 31 14q0 8-9 8-3 0-3-2 2-2 1-5-2-4-8-4Q3 11 0 18z" fill="url(#gEdge)"/><path d="M0 16q3-8 11-6-5 3-4 11 2 9 10 11Q1 31 0 16z" fill="#0d88dc"/><path d="M12 13q-3 8 5 12 6 2 11 0-4 8-12 7Q5 29 7 20q1-5 5-7z" fill="#0d4a94"/></svg></div>
  <div class="tk run"><svg width="30" height="28" viewBox="0 0 30 28"><path d="M0 1q0-1 1-1h9l3 4v6H0z" fill="#e0a000"/><path d="M0 5h12l2-2h16v24H0z" fill="url(#gFold)"/><path d="M5 27v-5q0-2 2-2h16q2 0 2 2v5z" fill="#0b6fc4"/><path d="M9 24h12" stroke="#0a4a90" stroke-width="1.500"/></svg></div>
  <div class="tk run"><svg width="28" height="28"><use href="#disk"/></svg></div>
  <div class="tk run on"><svg width="28" height="28"><use href="#chrome"/></svg></div>
  <div class="tk run"><svg width="27" height="27"><use href="#tg"/></svg><span class="cnt">973</span></div>
  <div class="tk run"><svg width="30" height="30"><use href="#vsc"/></svg></div>
 </div>
 <div class="tray d-flex align-items-center">
  <svg width="16" height="10" viewBox="0 0 16 10"><path d="M.5 9 8 1.500 15.500 9" fill="none" stroke="#1b1b1b" stroke-width="1.400"/></svg>
  <svg style="margin-left:12px" width="20" height="14" viewBox="0 0 20 14"><path d="M5 13Q.7 13 .7 9.500T4.500 6Q6 .8 10 .8T15.500 5Q19.300 5.500 19.300 9T16 13z" fill="#999" stroke="#1b1b1b" stroke-width="1.300"/><path d="M4 12.300Q10 5 17 12.300z" fill="#eee"/></svg>
  <svg style="margin-left:10px" width="20" height="20" viewBox="0 0 20 20"><path d="M1 9A9 9 0 0 1 18 5M18.500 0v5.500H13M10 19Q5 19 2 15M1.500 20v-5.500H7" fill="none" stroke="#1b1b1b" stroke-width="1.300"/><circle cx="15" cy="15" r="5" fill="#ff9a0c"/></svg>
  <span style="margin-left:19px">ENG</span>
  <svg style="margin-left:22px" width="21" height="15" viewBox="0 0 21 15"><g fill="none" stroke="#1b1b1b" stroke-width="1.500"><path d="M1 6Q10.500-4 20 6M4 8.500q6.500-6 13 0M6.500 11q4-4 8 0"/></g><circle cx="10.500" cy="12.800" r="1.900" fill="#1b1b1b"/></svg>
  <svg style="margin-left:9px" width="20" height="16" viewBox="0 0 20 16"><path d="M1 5.500h3L8 1.500v13l-4-4H1zM11 5q2 3 0 6M13.500 3q3.500 5 0 10" fill="none" stroke="#1b1b1b" stroke-width="1.300"/><path d="M16 1q4.500 7 0 14" fill="none" stroke="#aaa" stroke-width="1.300"/></svg>
  <svg style="margin-left:10px" width="21" height="16" viewBox="0 0 21 16"><path d="M0 3h6v3.500L4 8.500v5M1.200 0v3M4.800 0v3" stroke="#1b1b1b" fill="#1b1b1b" stroke-width="1.400"/><path d="M8 4.500h9q1 0 1 1v7q0 1-1 1H5" fill="none" stroke="#1b1b1b" stroke-width="1.300"/><path d="M8 6.500h8v5H6.500z" fill="#1b1b1b"/><path d="M19 7h2v4h-2z" fill="#1b1b1b"/></svg>
  <div class="text-end" style="margin-left:18px;letter-spacing:-.1px">21:43<br>11/02/2022</div>
 </div>
</div>
</body>
</html>
